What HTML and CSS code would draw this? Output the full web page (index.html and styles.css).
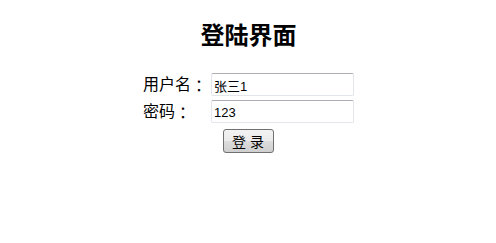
FILE: index.html
```html
<!DOCTYPE html>
<html lang="zh">
<head>
<meta charset="utf-8">
<title>登陆界面</title>
<link rel="stylesheet" href="styles.css">
</head>
<body>
<div class="page">
  <h1 class="title">登陆界面</h1>
  <form class="login">
    <div class="grid">
      <label class="label" for="u"><span>用户名</span><span class="colon" lang="ja">：</span></label>
      <input class="field" id="u" type="text" value="张三1">
      <label class="label" for="p"><span>密码</span><span class="colon" lang="ja">：</span></label>
      <input class="field" id="p" type="text" value="123">
    </div>
    <button class="btn" type="button">登 录</button>
  </form>
</div>
</body>
</html>
```
FILE: styles.css
```css
html, body {
  margin: 0;
  padding: 0;
  background: #ffffff;
}
.page {
  width: 496px;
  display: flex;
  flex-direction: column;
  align-items: center;
  padding-top: 21px;
  font-family: "Liberation Sans", "Noto Sans CJK SC", sans-serif;
  color: #000;
}
.title {
  margin: 0;
  font-size: 24px;
  line-height: 30px;
  font-weight: bold;
  padding-left: 1px;
}
.login {
  margin: 22px 0 0 0;
  display: flex;
  flex-direction: column;
  align-items: center;
}
.grid {
  display: grid;
  grid-template-columns: 64px 143px;
  column-gap: 4px;
  row-gap: 4px;
  align-items: center;
  margin-left: 1px;
}
.label {
  display: flex;
  align-items: center;
  height: 23px;
  font-size: 16px;
  line-height: 20px;
  white-space: nowrap;
}
.colon {
  font-family: "Noto Sans CJK JP", sans-serif;
}
.field {
  box-sizing: border-box;
  width: 143px;
  height: 23px;
  margin: 0;
  padding: 1px 2px 0 2px;
  border: 1px solid #e2e6ec;
  border-top-color: #acaeb4;
  border-radius: 2px;
  font-family: "Liberation Sans", "Noto Sans CJK SC", sans-serif;
  font-size: 13px;
  color: #000;
  background: #fff;
  outline: none;
}
.btn {
  box-sizing: border-box;
  margin-top: 6px;
  width: 51px;
  height: 24px;
  padding: 0;
  border: 1px solid #707070;
  border-radius: 3px;
  background: linear-gradient(#f2f2f2 0%, #ebebeb 50%, #dddddd 51%, #cfcfcf 100%);
  font-family: "Liberation Sans", "Noto Sans CJK SC", sans-serif;
  font-size: 14px;
  color: #000;
}
```
